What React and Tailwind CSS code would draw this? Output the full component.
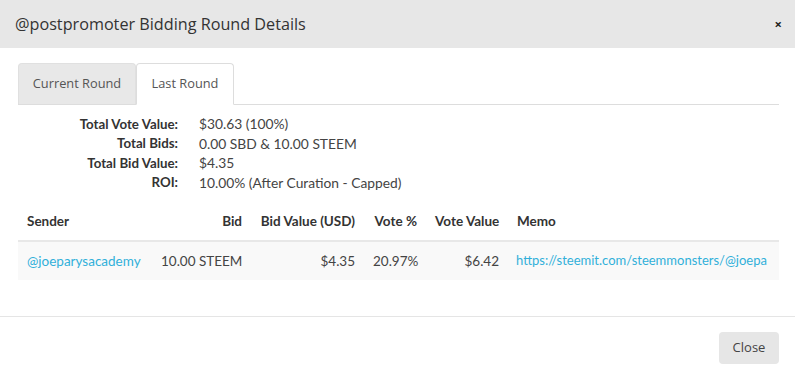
const info = [
  ['Total Vote Value:', '$30.63 (100%)'],
  ['Total Bids:', '0.00 SBD & 10.00 STEEM'],
  ['Total Bid Value:', '$4.35'],
  ['ROI:', '10.00% (After Curation - Capped)'],
]

const cols = [
  { key: 'sender', label: 'Sender', w: 'w-[134px]', align: 'text-left' },
  { key: 'bid', label: 'Bid', w: 'w-[99px]', align: 'text-right' },
  { key: 'usd', label: 'Bid Value (USD)', w: 'w-[113px]', align: 'text-right' },
  { key: 'pct', label: 'Vote %', w: 'w-[62px]', align: 'text-right' },
  { key: 'val', label: 'Vote Value', w: 'w-[82px]', align: 'text-right' },
  { key: 'memo', label: 'Memo', w: 'flex-1 min-w-0', align: 'text-left' },
]

const row = {
  sender: '@joeparysacademy',
  bid: '10.00 STEEM',
  usd: '$4.35',
  pct: '20.97%',
  val: '$6.42',
  memo: 'https://steemit.com/steemmonsters/@joeparysacademy/steem-monsters-giveaway',
}

export default function App() {
  return (
    <div className="w-[795px] h-[376px] bg-white text-[#333] font-['Open_Sans',sans-serif] flex flex-col">
      <div className="h-[48px] bg-[#e7e7e7] flex items-center justify-between pl-[15px] pr-[13px]">
        <h4 className="text-[16.2px] text-[#333]">@postpromoter Bidding Round Details</h4>
        <span className="text-[13px] font-bold text-[#222] leading-none">×</span>
      </div>

      <div className="pl-[18px] pr-[16px] pt-[15px] h-[268px]">
        <div className="flex border-b border-[#ddd] h-[42px]">
          <div className="w-[118px] h-[41px] bg-[#e8e8e8] border border-[#e0e0e0] border-b-0 rounded-t-[4px] flex items-center justify-center text-[12.8px] text-[#555]">
            Current Round
          </div>
          <div className="w-[98px] h-[42px] bg-white border border-[#ddd] border-b-white rounded-t-[4px] flex items-center justify-center text-[12.8px] text-[#555] -mb-px">
            Last Round
          </div>
        </div>

        <div className="font-['Lato',sans-serif] pt-[10px] flex flex-col">
          {info.map(([k, v]) => (
            <div key={k} className="flex h-[19.5px] items-center">
              <span className="w-[160px] text-right font-bold text-[13.3px] text-[#333]">{k}</span>
              <span className="pl-[21px] text-[13.8px] text-[#444]">{v}</span>
            </div>
          ))}
        </div>

        <div className="font-['Lato',sans-serif] text-[13.5px] mt-[10px]">
          <div className="flex h-[39px] items-center border-b-2 border-[#e8e8e8] font-bold text-[#333]">
            {cols.map((c) => (
              <div key={c.key} className={`${c.w} ${c.align} px-[9px] whitespace-nowrap`}>
                {c.label}
              </div>
            ))}
          </div>
          <div className="flex h-[38px] items-center bg-[#f9f9f9] text-[#444]">
            {cols.map((c) =>
              c.key === 'memo' ? (
                <div key={c.key} className={`${c.w} pl-[8px] pr-[12px]`}>
                  <div className="overflow-hidden whitespace-nowrap text-[13px] text-[#31b0d9]">{row.memo}</div>
                </div>
              ) : (
                <div
                  key={c.key}
                  className={`${c.w} ${c.align} px-[9px] whitespace-nowrap ${
                    c.key === 'sender' ? 'text-[#31b0d9]' : ''
                  }`}
                >
                  {row[c.key]}
                </div>
              )
            )}
          </div>
        </div>
      </div>

      <div className="border-t border-[#e5e5e5] flex justify-end pr-[16px] pt-[15px]">
        <button className="w-[60px] h-[32px] bg-[#e6e6e6] rounded-[4px] text-[13px] text-[#444]">
          Close
        </button>
      </div>
    </div>
  )
}
